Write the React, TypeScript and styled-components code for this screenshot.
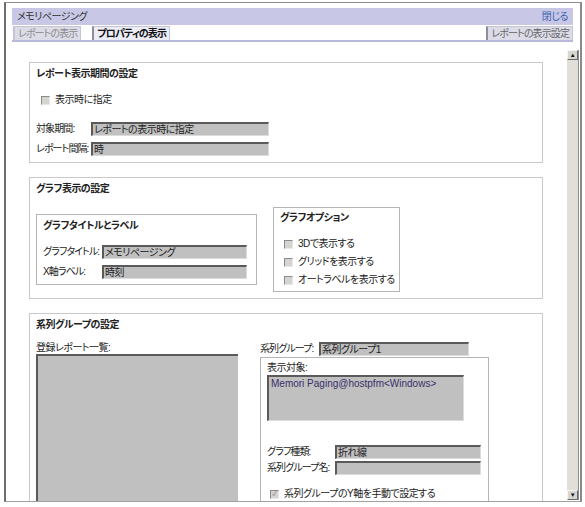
import React from 'react';
import styled, { createGlobalStyle } from 'styled-components';

const GlobalStyle = createGlobalStyle`
  * { box-sizing: border-box; }
  html, body {
    margin: 0;
    background: #ffffff;
  }
  body {
    font-family: "Liberation Sans", "Noto Sans CJK JP", sans-serif;
    font-feature-settings: "palt" 1;
    font-size: 10px;
    line-height: 12px;
    letter-spacing: -0.5px;
    color: #222;
  }
`;

const StyledWindow = styled.div`
  margin: 2px 3px 0 4px;
  height: 500px;
  border-top: 1px solid #8c8c8c;
  border-left: 2px solid #6e6e6e;
  border-right: 2px solid #8a8a8a;
  border-bottom: 1px solid #a0a0a0;
  padding-top: 5px;
  display: flex;
  flex-direction: column;
  overflow: hidden;
`;

const StyledTitleBar = styled.div`
  margin: 0 7px 0 6px;
  height: 17px;
  background: #c8c8e6;
  display: flex;
  align-items: center;
  justify-content: space-between;
  padding: 0 5px 0 5px;
  color: #333;
`;

const StyledClose = styled.span`
  color: #3a5fb0;
`;

const StyledTabRow = styled.div`
  margin: 1px 7px 0 6px;
  height: 16px;
  border-bottom: 2px solid #b9b9da;
  display: flex;
  align-items: flex-end;
  gap: 11px;
  padding-left: 1px;
`;

const StyledTab = styled.div<{ $active?: boolean; $right?: boolean }>`
  height: 14px;
  padding: 0 3px 0 3px;
  display: flex;
  align-items: center;
  white-space: nowrap;
  letter-spacing: -0.9px;
  background: ${(p) => (p.$active ? '#ececf6' : '#dcdce9')};
  border-left: 2px solid ${(p) => (p.$active || p.$right ? '#8d8d9c' : '#c4c4d4')};
  border-top: 1px solid #c4c4d4;
  border-right: 1px solid #c4c4d4;
  color: ${(p) => (p.$active ? '#111' : p.$right ? '#666' : '#8a8a8a')};
  font-weight: ${(p) => (p.$active ? 'bold' : 'normal')};
  margin-left: ${(p) => (p.$right ? 'auto' : '0')};
`;

const StyledBody = styled.div`
  flex: 1;
  display: flex;
  min-height: 0;
`;

const StyledMain = styled.div`
  flex: 1;
  padding: 20px 0 0 23px;
  overflow: hidden;
`;

const StyledSection = styled.div<{ $top?: number }>`
  width: 514px;
  border: 1px solid #c9c9c9;
  margin-top: ${(p) => p.$top ?? 0}px;
  padding: 5px 6px 6px 6px;
`;

const StyledSectionTitle = styled.div`
  font-weight: bold;
  height: 12px;
  white-space: nowrap;
`;

const StyledCheckRow = styled.div<{ $indent?: number }>`
  display: flex;
  align-items: center;
  height: 12px;
  padding-left: ${(p) => p.$indent ?? 5}px;
  gap: 5px;
  white-space: nowrap;
`;

const StyledCheckBox = styled.span`
  width: 9px;
  height: 9px;
  flex-shrink: 0;
  background: #d6d4d0;
  border-top: 1px solid #8a8a8a;
  border-left: 1px solid #8a8a8a;
  border-right: 1px solid #e8e8e8;
  border-bottom: 1px solid #e8e8e8;
  display: inline-flex;
  align-items: center;
  justify-content: center;
  font-size: 8px;
  line-height: 8px;
  color: #8a8a8a;
`;

const StyledField = styled.div<{ $label: number; $top?: number }>`
  display: flex;
  align-items: center;
  margin-top: ${(p) => p.$top ?? 0}px;
  & > span {
    width: ${(p) => p.$label}px;
    flex-shrink: 0;
    white-space: nowrap;
    letter-spacing: -0.9px;
  }
`;

const StyledInput = styled.div<{ $width: number; $height?: number }>`
  width: ${(p) => p.$width}px;
  height: ${(p) => p.$height ?? 14}px;
  background: #c0c0c0;
  border-top: 2px solid #5a5a5a;
  border-left: 2px solid #5a5a5a;
  border-right: 1px solid #dcdcdc;
  border-bottom: 1px solid #dcdcdc;
  padding-left: 1px;
  line-height: 11px;
  color: #222;
  white-space: nowrap;
  overflow: hidden;
`;

const StyledGraphRow = styled.div`
  display: flex;
  align-items: center;
  gap: 16px;
  margin-top: 12px;
`;

const StyledInnerBox = styled.div<{ $width: number; $height?: number }>`
  width: ${(p) => p.$width}px;
  ${(p) => (p.$height ? `height: ${p.$height}px;` : '')}
  border: 1px solid #b5b5b5;
  padding: 4px 6px 6px 6px;
`;

const StyledSeriesRow = styled.div`
  display: flex;
  gap: 22px;
  margin-top: 11px;
`;

const StyledListColumn = styled.div`
  width: 202px;
`;

const StyledList = styled.div`
  width: 202px;
  height: 160px;
  background: #c0c0c0;
  border-top: 2px solid #5a5a5a;
  border-left: 2px solid #5a5a5a;
`;

const StyledGroupColumn = styled.div`
  width: 229px;
`;

const StyledTargetBox = styled.div`
  width: 229px;
  height: 160px;
  border: 1px solid #b5b5b5;
  border-bottom: none;
  margin-top: 1px;
  padding: 4px 6px 0 6px;
`;

const StyledArea = styled(StyledInput)`
  margin-top: 1px;
  padding: 1px 2px;
  letter-spacing: 0;
  color: #3a2f6a;
`;

const StyledScrollBar = styled.div`
  width: 12px;
  margin: 8px 1px 1px 0;
  background: #e2dfd8;
  border-right: 1px solid #8c8c8c;
  display: flex;
  flex-direction: column;
  justify-content: space-between;
`;

const StyledArrow = styled.div`
  height: 10px;
  background: #d8d6d0;
  border-top: 1px solid #f4f4f4;
  border-left: 1px solid #f4f4f4;
  border-right: 1px solid #6a6a6a;
  border-bottom: 1px solid #6a6a6a;
  display: flex;
  align-items: center;
  justify-content: center;
  font-size: 6px;
  line-height: 6px;
  color: #111;
`;

const Spacer = styled.div<{ $h: number }>`
  height: ${(p) => p.$h}px;
`;

const App = () => {
  return (
    <>
      <GlobalStyle />
      <StyledWindow>
        <StyledTitleBar>
          <span>メモリページング</span>
          <StyledClose>閉じる</StyledClose>
        </StyledTitleBar>
        <StyledTabRow>
          <StyledTab>レポートの表示</StyledTab>
          <StyledTab $active>プロパティの表示</StyledTab>
          <StyledTab $right>レポートの表示設定</StyledTab>
        </StyledTabRow>
        <StyledBody>
          <StyledMain>
            <StyledSection>
              <StyledSectionTitle>レポート表示期間の設定</StyledSectionTitle>
              <Spacer $h={14} />
              <StyledCheckRow>
                <StyledCheckBox />
                表示時に指定
              </StyledCheckRow>
              <StyledField $label={55} $top={16}>
                <span>対象期間:</span>
                <StyledInput $width={178}>レポートの表示時に指定</StyledInput>
              </StyledField>
              <StyledField $label={55} $top={6}>
                <span>レポート間隔:</span>
                <StyledInput $width={178}>時</StyledInput>
              </StyledField>
            </StyledSection>

            <StyledSection $top={14}>
              <StyledSectionTitle>グラフ表示の設定</StyledSectionTitle>
              <StyledGraphRow>
                <StyledInnerBox $width={221} $height={71}>
                  <StyledSectionTitle style={{ marginTop: 1 }}>グラフタイトルとラベル</StyledSectionTitle>
                  <StyledField $label={59} $top={13}>
                    <span>グラフタイトル:</span>
                    <StyledInput $width={145}>メモリページング</StyledInput>
                  </StyledField>
                  <StyledField $label={59} $top={6}>
                    <span>X軸ラベル:</span>
                    <StyledInput $width={145}>時刻</StyledInput>
                  </StyledField>
                </StyledInnerBox>
                <StyledInnerBox $width={127} $height={85}>
                  <StyledSectionTitle>グラフオプション</StyledSectionTitle>
                  <Spacer $h={14} />
                  <StyledCheckRow $indent={4}>
                    <StyledCheckBox />
                    3Dで表示する
                  </StyledCheckRow>
                  <Spacer $h={6} />
                  <StyledCheckRow $indent={4}>
                    <StyledCheckBox />
                    グリッドを表示する
                  </StyledCheckRow>
                  <Spacer $h={6} />
                  <StyledCheckRow $indent={4}>
                    <StyledCheckBox />
                    オートラベルを表示する
                  </StyledCheckRow>
                </StyledInnerBox>
              </StyledGraphRow>
            </StyledSection>

            <StyledSection $top={14}>
              <StyledSectionTitle>系列グループの設定</StyledSectionTitle>
              <StyledSeriesRow>
                <StyledListColumn>
                  <div>登録レポート一覧:</div>
                  <StyledList />
                </StyledListColumn>
                <StyledGroupColumn>
                  <StyledField $label={59}>
                    <span>系列グループ:</span>
                    <StyledInput $width={150}>系列グループ1</StyledInput>
                  </StyledField>
                  <StyledTargetBox>
                    <div>表示対象:</div>
                    <StyledArea $width={197} $height={46}>
                      Memori Paging@hostpfm&lt;Windows&gt;
                    </StyledArea>
                    <StyledField $label={68} $top={24}>
                      <span>グラフ種類:</span>
                      <StyledInput $width={146}>折れ線</StyledInput>
                    </StyledField>
                    <StyledField $label={68} $top={2}>
                      <span>系列グループ名:</span>
                      <StyledInput $width={146} />
                    </StyledField>
                    <Spacer $h={13} />
                    <StyledCheckRow $indent={3}>
                      <StyledCheckBox>✓</StyledCheckBox>
                      系列グループのY軸を手動で設定する
                    </StyledCheckRow>
                  </StyledTargetBox>
                </StyledGroupColumn>
              </StyledSeriesRow>
            </StyledSection>
          </StyledMain>
          <StyledScrollBar>
            <StyledArrow>▲</StyledArrow>
            <StyledArrow>▼</StyledArrow>
          </StyledScrollBar>
        </StyledBody>
      </StyledWindow>
    </>
  );
};

export default App;
